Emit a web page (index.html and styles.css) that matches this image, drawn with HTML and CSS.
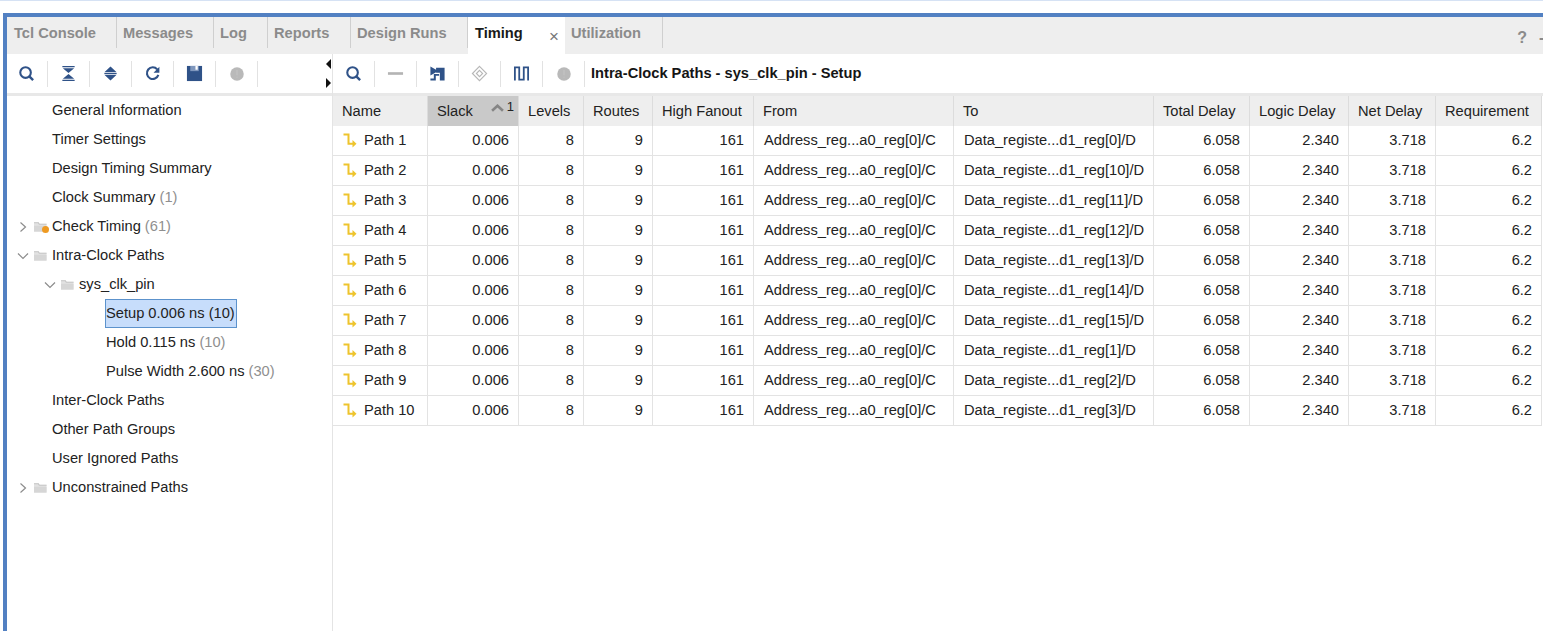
FILE: index.html
```html
<!DOCTYPE html>
<html lang="en">
<head>
<meta charset="utf-8">
<title>Timing</title>
<link rel="stylesheet" href="styles.css">
</head>
<body>
<svg class="defs" width="0" height="0" aria-hidden="true">
  <symbol id="i-search" viewBox="0 0 18 18"><circle cx="8" cy="8" r="5.6" fill="none" stroke="#2f5288" stroke-width="2.2"/><path d="M12 12l4 4" stroke="#2f5288" stroke-width="2.6" fill="none"/></symbol>
  <symbol id="i-collapse" viewBox="0 0 18 18"><path d="M2.5 1h13v1.4h-13zM3 3.4h12L9 8.4zM2.5 15.6h13V17h-13zM3 14.6h12L9 9.6z" fill="#2f5288"/></symbol>
  <symbol id="i-expand" viewBox="0 0 18 18"><path d="M9 1.5L15.5 7.6h-13zM2.5 8.4h13v1.2h-13zM2.5 10.4h13L9 16.5z" fill="#2f5288"/></symbol>
  <symbol id="i-refresh" viewBox="0 0 18 18"><path d="M14 4.6A6.2 6.2 0 1 0 15.2 10.5" fill="none" stroke="#2f5288" stroke-width="2.2"/><path d="M16.3 1.8v6.4h-6.2z" fill="#2f5288"/></symbol>
  <symbol id="i-save" viewBox="0 0 18 18"><path d="M1 1h16v16H1z" fill="#2f5288"/><path d="M4.5 1h9v5.5h-9z" fill="#7f97bd"/><path d="M10 1h2.4v4H10z" fill="#fff"/></symbol>
  <symbol id="i-stop" viewBox="0 0 18 18"><circle cx="9" cy="9" r="7.6" fill="#b9b9b9"/><path d="M8.6 4.5h.8v6h-.8zM8.6 12h.8v1.2h-.8z" fill="#c9c9c9"/></symbol>
  <symbol id="i-dash" viewBox="0 0 18 18"><path d="M1 7.6h16v2.8H1z" fill="#b4b4b4"/></symbol>
  <symbol id="i-step" viewBox="0 0 18 18"><path d="M1.5 1.5L7.5 5V3h9v13.5h-5V8.2H7.5v-.6l-6 3.4z" fill="#2f5288"/><path d="M1.5 16.5v-2.2h3.6V9.6h5.6v1.8H7.2v5.1z" fill="#2f5288"/></symbol>
  <symbol id="i-diamond" viewBox="0 0 18 18"><path d="M9 1.5L16.5 9 9 16.5 1.5 9z" fill="none" stroke="#b7b7b7" stroke-width="1.2"/><path d="M9 5.7L12.3 9 9 12.3 5.7 9z" fill="none" stroke="#b7b7b7" stroke-width="1.2"/></symbol>
  <symbol id="i-wave" viewBox="0 0 18 18"><path d="M2 16.5V2.5h4.6v13h4.8v-13H16v14" fill="none" stroke="#2f5288" stroke-width="1.9"/></symbol>
  <symbol id="i-path" viewBox="0 0 16 16"><path d="M1.5 2.5h5v9.2h6" fill="none" stroke="#eec42c" stroke-width="2"/><path d="M10.5 8l4 3.7-4 3.7z" fill="#eec42c"/></symbol>
  <symbol id="i-folder" viewBox="0 0 16 14"><path d="M1 2.5h5l1 1.5h7.5v8.5H1z" fill="#e2e2e2"/><path d="M1 2.5h5l1 1.5h7.5v1.2H6.4L5.2 3.6H1z" fill="#c6c6c6"/><path d="M1 6.2h13.5v6.3H1z" fill="#d6d6d6"/></symbol>
  <symbol id="i-right" viewBox="0 0 10 12"><path d="M2.5 1.5L7.5 6l-5 4.5" fill="none" stroke="#8c8c8c" stroke-width="1.2"/></symbol>
  <symbol id="i-down" viewBox="0 0 12 10"><path d="M1 2.5L6 7.5l5-5" fill="none" stroke="#8c8c8c" stroke-width="1.2"/></symbol>
</svg>

<div class="topline"></div>
<main class="window">
  <nav class="tabs">
    <div class="tab t-tcl">Tcl Console</div>
    <div class="tab t-msg">Messages</div>
    <div class="tab t-log">Log</div>
    <div class="tab t-rep">Reports</div>
    <div class="tab t-run">Design Runs</div>
    <div class="tab tab-active t-tim">Timing<span class="tab-close">×</span></div>
    <div class="tab t-uti">Utilization</div>
    <div class="tab-tools"><span class="help">?</span><span class="min">-</span></div>
  </nav>
  <div class="panes">
    <aside class="left">
      <div class="toolbar toolbar-left">
        <span class="tool"><svg class="ico"><use href="#i-search"/></svg></span>
        <span class="tool"><svg class="ico"><use href="#i-collapse"/></svg></span>
        <span class="tool"><svg class="ico"><use href="#i-expand"/></svg></span>
        <span class="tool"><svg class="ico"><use href="#i-refresh"/></svg></span>
        <span class="tool"><svg class="ico"><use href="#i-save"/></svg></span>
        <span class="tool"><svg class="ico ico-round"><use href="#i-stop"/></svg></span>
        <span class="scrollers"><span class="arrow arrow-l"></span><span class="arrow arrow-r"></span></span>
      </div>
      <ul class="tree">
        <li class="node l1">General Information</li>
        <li class="node l1">Timer Settings</li>
        <li class="node l1">Design Timing Summary</li>
        <li class="node l1">Clock Summary <span class="count">(1)</span></li>
        <li class="node l1 has-icon"><svg class="tw"><use href="#i-right"/></svg><span class="folder"><svg class="fo"><use href="#i-folder"/></svg><span class="warn-dot"></span></span>Check Timing <span class="count">(61)</span></li>
        <li class="node l1 has-icon"><svg class="tw"><use href="#i-down"/></svg><span class="folder"><svg class="fo"><use href="#i-folder"/></svg></span>Intra-Clock Paths</li>
        <li class="node l2 has-icon"><svg class="tw"><use href="#i-down"/></svg><span class="folder"><svg class="fo"><use href="#i-folder"/></svg></span>sys_clk_pin</li>
        <li class="node node-sel l3"><span class="selected">Setup 0.006 ns (10)</span></li>
        <li class="node l3">Hold 0.115 ns <span class="count">(10)</span></li>
        <li class="node l3">Pulse Width 2.600 ns <span class="count">(30)</span></li>
        <li class="node l1">Inter-Clock Paths</li>
        <li class="node l1">Other Path Groups</li>
        <li class="node l1">User Ignored Paths</li>
        <li class="node l1 has-icon"><svg class="tw"><use href="#i-right"/></svg><span class="folder"><svg class="fo"><use href="#i-folder"/></svg></span>Unconstrained Paths</li>
      </ul>
    </aside>
    <section class="right">
      <div class="toolbar toolbar-right">
        <span class="tool"><svg class="ico"><use href="#i-search"/></svg></span>
        <span class="tool"><svg class="ico"><use href="#i-dash"/></svg></span>
        <span class="tool"><svg class="ico"><use href="#i-step"/></svg></span>
        <span class="tool"><svg class="ico"><use href="#i-diamond"/></svg></span>
        <span class="tool"><svg class="ico"><use href="#i-wave"/></svg></span>
        <span class="tool"><svg class="ico ico-round"><use href="#i-stop"/></svg></span>
        <span class="title">Intra-Clock Paths - sys_clk_pin - Setup</span>
      </div>
      <table class="grid">
        <colgroup>
          <col class="c-name"><col class="c-slack"><col class="c-lev"><col class="c-rou"><col class="c-fan"><col class="c-from"><col class="c-to"><col class="c-total"><col class="c-logic"><col class="c-net"><col class="c-req">
        </colgroup>
        <thead>
          <tr>
            <th>Name</th>
            <th class="sorted"><span class="sort-wrap">Slack<span class="sort"><svg class="caret" viewBox="0 0 12 7"><path d="M1 6l5-4.6L11 6" fill="none" stroke="#858585" stroke-width="2.4"/></svg><span class="sort-n">1</span></span></span></th>
            <th>Levels</th><th>Routes</th><th>High Fanout</th><th>From</th><th>To</th><th>Total Delay</th><th>Logic Delay</th><th>Net Delay</th><th>Requirement</th>
          </tr>
        </thead>
        <tbody>
          <tr><td class="name"><svg class="pi"><use href="#i-path"/></svg>Path 1</td><td class="n">0.006</td><td class="n">8</td><td class="n">9</td><td class="n">161</td><td>Address_reg...a0_reg[0]/C</td><td>Data_registe...d1_reg[0]/D</td><td class="n">6.058</td><td class="n">2.340</td><td class="n">3.718</td><td class="n">6.2</td></tr>
          <tr><td class="name"><svg class="pi"><use href="#i-path"/></svg>Path 2</td><td class="n">0.006</td><td class="n">8</td><td class="n">9</td><td class="n">161</td><td>Address_reg...a0_reg[0]/C</td><td>Data_registe...d1_reg[10]/D</td><td class="n">6.058</td><td class="n">2.340</td><td class="n">3.718</td><td class="n">6.2</td></tr>
          <tr><td class="name"><svg class="pi"><use href="#i-path"/></svg>Path 3</td><td class="n">0.006</td><td class="n">8</td><td class="n">9</td><td class="n">161</td><td>Address_reg...a0_reg[0]/C</td><td>Data_registe...d1_reg[11]/D</td><td class="n">6.058</td><td class="n">2.340</td><td class="n">3.718</td><td class="n">6.2</td></tr>
          <tr><td class="name"><svg class="pi"><use href="#i-path"/></svg>Path 4</td><td class="n">0.006</td><td class="n">8</td><td class="n">9</td><td class="n">161</td><td>Address_reg...a0_reg[0]/C</td><td>Data_registe...d1_reg[12]/D</td><td class="n">6.058</td><td class="n">2.340</td><td class="n">3.718</td><td class="n">6.2</td></tr>
          <tr><td class="name"><svg class="pi"><use href="#i-path"/></svg>Path 5</td><td class="n">0.006</td><td class="n">8</td><td class="n">9</td><td class="n">161</td><td>Address_reg...a0_reg[0]/C</td><td>Data_registe...d1_reg[13]/D</td><td class="n">6.058</td><td class="n">2.340</td><td class="n">3.718</td><td class="n">6.2</td></tr>
          <tr><td class="name"><svg class="pi"><use href="#i-path"/></svg>Path 6</td><td class="n">0.006</td><td class="n">8</td><td class="n">9</td><td class="n">161</td><td>Address_reg...a0_reg[0]/C</td><td>Data_registe...d1_reg[14]/D</td><td class="n">6.058</td><td class="n">2.340</td><td class="n">3.718</td><td class="n">6.2</td></tr>
          <tr><td class="name"><svg class="pi"><use href="#i-path"/></svg>Path 7</td><td class="n">0.006</td><td class="n">8</td><td class="n">9</td><td class="n">161</td><td>Address_reg...a0_reg[0]/C</td><td>Data_registe...d1_reg[15]/D</td><td class="n">6.058</td><td class="n">2.340</td><td class="n">3.718</td><td class="n">6.2</td></tr>
          <tr><td class="name"><svg class="pi"><use href="#i-path"/></svg>Path 8</td><td class="n">0.006</td><td class="n">8</td><td class="n">9</td><td class="n">161</td><td>Address_reg...a0_reg[0]/C</td><td>Data_registe...d1_reg[1]/D</td><td class="n">6.058</td><td class="n">2.340</td><td class="n">3.718</td><td class="n">6.2</td></tr>
          <tr><td class="name"><svg class="pi"><use href="#i-path"/></svg>Path 9</td><td class="n">0.006</td><td class="n">8</td><td class="n">9</td><td class="n">161</td><td>Address_reg...a0_reg[0]/C</td><td>Data_registe...d1_reg[2]/D</td><td class="n">6.058</td><td class="n">2.340</td><td class="n">3.718</td><td class="n">6.2</td></tr>
          <tr><td class="name"><svg class="pi"><use href="#i-path"/></svg>Path 10</td><td class="n">0.006</td><td class="n">8</td><td class="n">9</td><td class="n">161</td><td>Address_reg...a0_reg[0]/C</td><td>Data_registe...d1_reg[3]/D</td><td class="n">6.058</td><td class="n">2.340</td><td class="n">3.718</td><td class="n">6.2</td></tr>
        </tbody>
      </table>
    </section>
  </div>
</main>
</body>
</html>
```
FILE: styles.css
```css
* { box-sizing: border-box; }
html, body { margin: 0; height: 100%; overflow: hidden; background: #fff; }
body {
  font-family: "Liberation Sans", Arial, sans-serif;
  font-size: 14.67px;
  color: #1c1c1c;
  display: flex;
  flex-direction: column;
}
.defs { position: absolute; }
.topline { height: 1px; background: #d6e2f4; margin-bottom: 12px; flex: none; }

.window {
  flex: 1;
  min-height: 0;
  margin-left: 3px;
  border-top: 4px solid #5280c2;
  border-left: 4px solid #5280c2;
  display: flex;
  flex-direction: column;
}

/* Tabs */
.tabs { height: 37px; flex: none; background: #eeeeee; display: flex; align-items: flex-start; }
.tab {
  height: 31px;
  padding: 8px 0 0 7px;
  font-weight: bold;
  color: #8b8b8b;
  border-right: 1px solid #cfcfcf;
  white-space: nowrap;
  line-height: 17px;
}
.t-tcl { width: 110px; }
.t-msg { width: 97px; padding-left: 6px; }
.t-log { width: 54px; padding-left: 6px; }
.t-rep { width: 83px; padding-left: 6px; }
.t-run { width: 117px; padding-left: 6px; }
.t-tim { width: 97px; padding-left: 7px; height: 37px; background: #fff; color: #1a1a1a; border-right: 0; position: relative; }
.t-uti { width: 98px; padding-left: 6px; }
.tab-close { position: absolute; left: 81px; top: 11px; font-weight: normal; font-size: 17px; color: #777; line-height: 17px; }
.tab-tools { margin-left: auto; display: flex; gap: 12px; padding-top: 12px; font-weight: bold; color: #8b8b8b; font-size: 16px; line-height: 18px; }
.min { width: 4px; overflow: hidden; }

/* Panes */
.panes { flex: 1; min-height: 0; display: flex; }
.left { width: 326px; flex: none; border-right: 1px solid #e4e4e4; display: flex; flex-direction: column; }
.right { flex: 1; min-width: 0; display: flex; flex-direction: column; }

.toolbar { height: 42px; flex: none; display: flex; align-items: center; border-bottom: 3px solid #e8e8e8; }
.tool {
  width: 42px;
  height: 26px;
  flex: none;
  display: flex;
  align-items: center;
  justify-content: center;
  border-right: 1px solid #e2e2e2;
}
.toolbar-left .tool { position: relative; left: -1px; }
.ico { width: 17px; height: 17px; display: block; }
.ico-round { width: 16px; height: 16px; }
.scrollers { margin-left: auto; margin-right: 1px; display: flex; flex-direction: column; gap: 9px; }
.arrow { width: 0; height: 0; border-top: 5px solid transparent; border-bottom: 5px solid transparent; display: block; }
.arrow-l { border-right: 5px solid #111; }
.arrow-r { border-left: 5px solid #111; }
.title { font-weight: bold; color: #151515; margin: 0 0 2px 6px; white-space: nowrap; }

/* Tree */
.tree { list-style: none; margin: 0; padding: 0; }
.node { height: 29px; padding-bottom: 2px; display: flex; align-items: center; white-space: pre; color: #222; }
.node-sel { padding-bottom: 0; }
.l1 { padding-left: 45px; }
.l2 { padding-left: 72px; }
.l3 { padding-left: 99px; }
.has-icon { position: relative; }
.count { color: #8f8f8f; }
.tw { position: absolute; width: 12px; height: 12px; left: 10px; top: 9px; }
.l2 .tw { left: 37px; }
.folder { position: absolute; left: 26px; top: 8px; width: 15px; height: 13px; }
.l2 .folder { left: 53px; }
.fo { width: 15px; height: 13px; display: block; }
.warn-dot { position: absolute; right: -1px; bottom: 0; width: 7px; height: 7px; border-radius: 50%; background: #ee9a22; }
.selected { background: #c7ddfb; border: 1px solid #5c92cc; height: 29px; line-height: 27px; width: 132px; margin-left: -1px; display: block; }

/* Table */
.grid { width: 1209px; table-layout: fixed; border-collapse: separate; border-spacing: 0; }
.c-name { width: 95px; }
.c-slack { width: 91px; }
.c-lev { width: 65px; }
.c-rou { width: 69px; }
.c-fan { width: 101px; }
.c-from { width: 200px; }
.c-to { width: 200px; }
.c-total { width: 96px; }
.c-logic { width: 99px; }
.c-net { width: 87px; }
.c-req { width: 106px; }
th {
  height: 30px;
  font-weight: normal;
  text-align: left;
  background: #eeeeee;
  padding: 0 0 0 9px;
  border-right: 1px solid #dcdcdc;
  color: #222;
  white-space: nowrap;
}
th.sorted { background: #c9c9c9; }
.sort-wrap { display: flex; justify-content: space-between; padding-right: 4px; }
.sort { display: flex; gap: 3px; margin-top: -3px; }
.caret { width: 13px; height: 8px; margin-top: 4px; }
.sort-n { font-size: 13px; line-height: 14px; }
td {
  height: 30px;
  padding: 0 0 2px 10px;
  border-right: 1px solid #e3e3e3;
  border-bottom: 1px solid #e3e3e3;
  white-space: nowrap;
  color: #222;
  overflow: hidden;
}
td.n { text-align: right; padding: 0 9px 2px 0; }
td.name { padding-left: 9px; }
.pi { width: 16px; height: 16px; vertical-align: -3px; margin-right: 6px; }
```
